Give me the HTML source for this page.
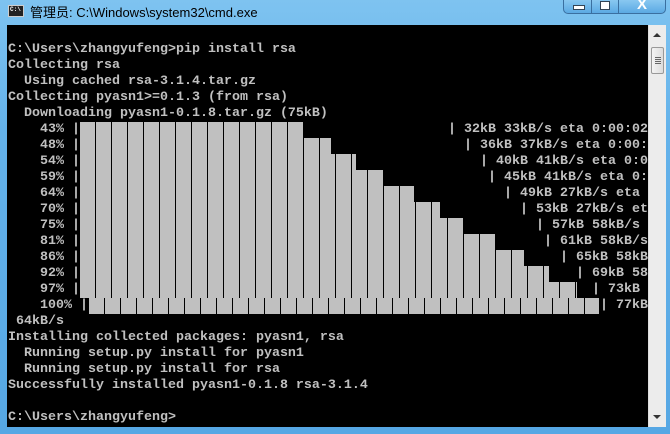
<!DOCTYPE html>
<html><head><meta charset="utf-8"><style>
html,body{margin:0;padding:0;width:670px;height:434px;overflow:hidden;background:#5fb0e8;}
.win{position:absolute;left:0;top:0;width:670px;height:434px;background:linear-gradient(180deg,#7ec3f0 0%,#64b2ea 30%,#56a7e4 100%);}
.title{position:absolute;left:30px;top:2px;font:13px "Liberation Sans","Noto Sans CJK SC",sans-serif;color:#000;}
.icon{position:absolute;left:8px;top:5px;width:16px;height:12px;background:#222;border:1px solid #ccc;box-sizing:border-box;}
.icon span{position:absolute;left:1px;top:0px;font:bold 6px "Liberation Mono",monospace;color:#fff;}
.btns{position:absolute;left:563px;top:-1px;width:103px;height:15px;border:1px solid #3a6fa0;border-top:none;border-radius:0 0 5px 5px;background:linear-gradient(180deg,#8ccaf2,#5ba9e3);box-sizing:border-box;}
.btns i{position:absolute;top:0;width:1px;height:14px;background:#3a6fa0;}
.con{position:absolute;left:7px;top:25px;width:641px;height:402px;background:#000;overflow:hidden;}
pre,.t{margin:0;font:bold 13.33px/16px "Liberation Mono",monospace;color:#c0c0c0;white-space:pre;}
pre{position:absolute;left:1px;top:1px;}
.t{position:absolute;}
.bar{position:absolute;height:16px;background:repeating-linear-gradient(90deg,#c0c0c0 0 15px,#000 15px 16px);}
.sb{position:absolute;left:648px;top:25px;width:18px;height:402px;background:#ececec;border-left:1px solid #ddd;box-sizing:border-box;}
.thumb{position:absolute;left:2px;top:22px;width:13px;height:27px;border:1px solid #999;border-radius:2px;background:linear-gradient(90deg,#f4f4f4,#dcdcdc);box-sizing:border-box;}
</style></head><body>
<div class="win">
<div class="icon"><span>C:\</span></div>
<div class="title">管理员: C:\Windows\system32\cmd.exe</div>
<div class="btns"><i style="left:27px"></i><i style="left:54px"></i>
<div style="position:absolute;left:9px;top:6px;width:10px;height:3px;background:#fff;border:1px solid #345;"></div>
<div style="position:absolute;left:36px;top:2px;width:8px;height:7px;background:#fff;border:1px solid #345;"></div>
<div style="position:absolute;left:73px;top:-3px;font:bold 15px 'Liberation Sans',sans-serif;color:#fff;">X</div>
</div>
<div class="con">
<div class="bar" style="left:73px;top:97px;width:223px;"></div>
<div class="bar" style="left:73px;top:113px;width:251px;"></div>
<div class="bar" style="left:73px;top:129px;width:276px;"></div>
<div class="bar" style="left:73px;top:145px;width:303px;"></div>
<div class="bar" style="left:73px;top:161px;width:334px;"></div>
<div class="bar" style="left:73px;top:177px;width:360px;"></div>
<div class="bar" style="left:73px;top:193px;width:383px;"></div>
<div class="bar" style="left:73px;top:209px;width:415px;"></div>
<div class="bar" style="left:73px;top:225px;width:444px;"></div>
<div class="bar" style="left:73px;top:241px;width:469px;"></div>
<div class="bar" style="left:73px;top:257px;width:497px;"></div>
<div class="bar" style="left:81px;top:273px;width:511px;background:repeating-linear-gradient(90deg,#000 0 1px,#c0c0c0 1px 16px);"></div>
<pre>&nbsp;
C:\Users\zhangyufeng>pip install rsa
Collecting rsa
  Using cached rsa-3.1.4.tar.gz
Collecting pyasn1>=0.1.3 (from rsa)
  Downloading pyasn1-0.1.8.tar.gz (75kB)
    43% |
    48% |
    54% |
    59% |
    64% |
    70% |
    75% |
    81% |
    86% |
    92% |
    97% |
    100% |
 64kB/s
Installing collected packages: pyasn1, rsa
  Running setup.py install for pyasn1
  Running setup.py install for rsa
Successfully installed pyasn1-0.1.8 rsa-3.1.4

C:\Users\zhangyufeng></pre>
<div class="t" style="left:441px;top:97px">| 32kB 33kB/s eta 0:00:02</div>
<div class="t" style="left:457px;top:113px">| 36kB 37kB/s eta 0:00:</div>
<div class="t" style="left:473px;top:129px">| 40kB 41kB/s eta 0:0</div>
<div class="t" style="left:481px;top:145px">| 45kB 41kB/s eta 0:</div>
<div class="t" style="left:497px;top:161px">| 49kB 27kB/s eta</div>
<div class="t" style="left:513px;top:177px">| 53kB 27kB/s et</div>
<div class="t" style="left:529px;top:193px">| 57kB 58kB/s</div>
<div class="t" style="left:537px;top:209px">| 61kB 58kB/s</div>
<div class="t" style="left:553px;top:225px">| 65kB 58kB</div>
<div class="t" style="left:569px;top:241px">| 69kB 58</div>
<div class="t" style="left:585px;top:257px">| 73kB</div>
<div class="t" style="left:593px;top:273px">| 77kB</div>
</div>
<div class="sb">
<div style="position:absolute;left:4px;top:8px;width:0;height:0;border-left:4px solid transparent;border-right:4px solid transparent;border-bottom:4px solid #333;"></div>
<div class="thumb"><div style="position:absolute;left:3px;top:9px;width:6px;height:7px;background:repeating-linear-gradient(180deg,#666 0 1px,transparent 1px 2px);"></div></div>
<div style="position:absolute;left:4px;top:390px;width:0;height:0;border-left:4px solid transparent;border-right:4px solid transparent;border-top:4px solid #333;"></div>
</div>
</div>
</body></html>
